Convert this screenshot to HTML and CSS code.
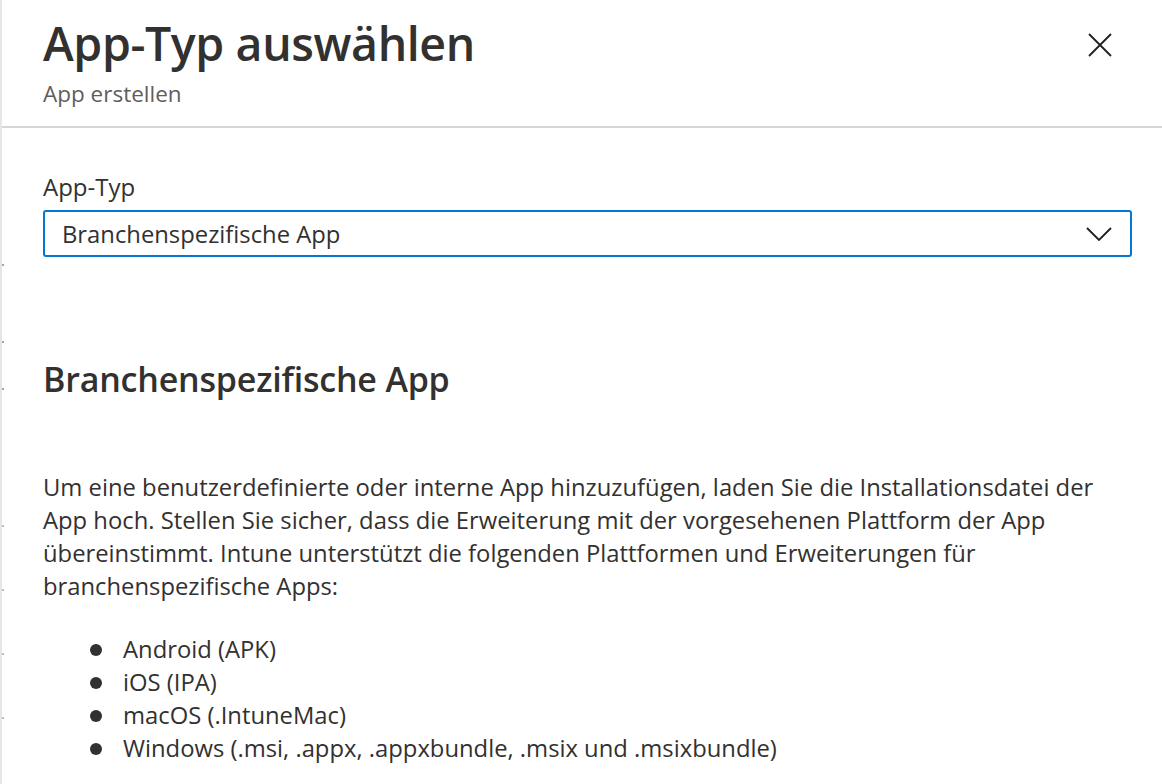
FILE: index.html
```html
<!DOCTYPE html>
<html lang="de">
<head>
  <meta charset="UTF-8" />
  <meta name="viewport" content="width=device-width, initial-scale=1.0" />
  <title>App-Typ auswählen</title>
  <link rel="stylesheet" href="styles.css">
</head>
<body>
  <div class="panel">
    <div class="header">
      <div class="titles">
        <h1>App-Typ auswählen</h1>
        <p class="subtitle">App erstellen</p>
      </div>
      <button class="close-btn" aria-label="Schließen">
        <svg width="24" height="24" viewBox="0 0 24 24">
          <path d="M1 1 L23 23 M23 1 L1 23" stroke="#201f1e" stroke-width="1.8" fill="none" />
        </svg>
      </button>
    </div>

    <div class="content">
      <label class="field-label" for="appType">App-Typ</label>
      <div class="dropdown" id="appType">
        <span>Branchenspezifische App</span>
        <svg width="26" height="14" viewBox="0 0 26 14">
          <path d="M1 1 L13 13 L25 1" stroke="#201f1e" stroke-width="1.8" fill="none" />
        </svg>
      </div>

      <h2>Branchenspezifische App</h2>

      <p class="description">
        Um eine benutzerdefinierte oder interne App hinzuzufügen, laden Sie die Installationsdatei der
        App hoch. Stellen Sie sicher, dass die Erweiterung mit der vorgesehenen Plattform der App
        übereinstimmt. Intune unterstützt die folgenden Plattformen und Erweiterungen für
        branchenspezifische Apps:
      </p>

      <ul class="platforms">
        <li>Android (APK)</li>
        <li>iOS (IPA)</li>
        <li>macOS (.IntuneMac)</li>
        <li>Windows (.msi, .appx, .appxbundle, .msix und .msixbundle)</li>
      </ul>
    </div>
  </div>
</body>
</html>
```

FILE: styles.css
```css
* {
  margin: 0;
  padding: 0;
  box-sizing: border-box;
}

body {
  font-family: 'Open Sans', 'Noto Sans', sans-serif;
  color: #323130;
  background: #fff;
  overflow: hidden;
}

.panel {
  min-height: 784px;
  border-left: 2px solid #e6e6e6;
  /* edges of the blade behind the panel */
  background:
    linear-gradient(#a6a6a6, #a6a6a6) 0 264px / 2px 2px no-repeat,
    linear-gradient(#a6a6a6, #a6a6a6) 0 341px / 2px 2px no-repeat,
    linear-gradient(#a6a6a6, #a6a6a6) 0 388px / 2px 2px no-repeat,
    linear-gradient(#bdbdbd, #bdbdbd) 0 525px / 2px 2px no-repeat,
    linear-gradient(#bdbdbd, #bdbdbd) 0 589px / 2px 2px no-repeat,
    linear-gradient(#bdbdbd, #bdbdbd) 0 653px / 2px 2px no-repeat,
    linear-gradient(#bdbdbd, #bdbdbd) 0 717px / 2px 2px no-repeat,
    #fff;
}

.header {
  display: flex;
  justify-content: space-between;
  align-items: flex-start;
  height: 128px;
  padding: 12px 50px 0 41px;
  border-bottom: 2px solid #d6d6d6;
}

h1 {
  font-size: 46.5px;
  font-weight: 600;
  line-height: 62px;
  letter-spacing: -0.4px;
  color: #323130;
}

.subtitle {
  font-size: 22.5px;
  line-height: 30px;
  color: #605e5c;
  margin-top: 5px;
}

.close-btn {
  background: none;
  border: none;
  width: 24px;
  height: 24px;
  margin-top: 21px;
  cursor: pointer;
}

.content {
  padding: 43px 30px 0 41px;
}

.field-label {
  display: block;
  font-size: 24px;
  line-height: 32px;
  margin-bottom: 7px;
}

.dropdown {
  display: flex;
  justify-content: space-between;
  align-items: center;
  height: 47px;
  border: 2px solid #0078d4;
  border-radius: 3px;
  padding: 0 18px 0 17px;
  font-size: 23.8px;
}

h2 {
  font-size: 34px;
  font-weight: 600;
  line-height: 44px;
  margin-top: 100px;
  letter-spacing: -0.2px;
}

.description {
  font-size: 23.8px;
  line-height: 33px;
  margin-top: 70px;
}

.platforms {
  list-style: none;
  margin-top: 30px;
  font-size: 23.8px;
  line-height: 33px;
}

.platforms li {
  position: relative;
  padding-left: 80px;
}

.platforms li::before {
  content: "";
  position: absolute;
  left: 47px;
  top: 11px;
  width: 12px;
  height: 12px;
  border-radius: 50%;
  background: #323130;
}
```
